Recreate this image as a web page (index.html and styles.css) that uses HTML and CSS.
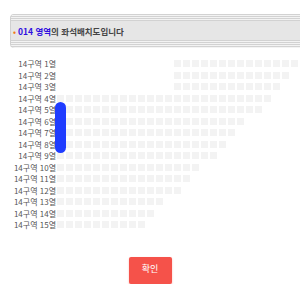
FILE: index.html
```html
<!DOCTYPE html>
<html lang="ko">
<head>
    <meta charset="UTF-8">
    <meta name="viewport" content="width=device-width, initial-scale=1.0">
    <title>좌석배치도</title>
    <link rel="stylesheet" href="styles.css">
    <script>
        // [first seat column, number of seats] for each row
        const rows = [
            [13, 14], [13, 13], [13, 12], [0, 24], [0, 23],
            [0, 21], [0, 20], [0, 19], [0, 18], [0, 16],
            [0, 15], [0, 14], [0, 12], [0, 11], [0, 10]
        ];

        function buildSeats() {
            const map = document.getElementById('seat-map');
            rows.forEach((row, i) => {
                const line = document.createElement('div');
                line.className = 'seat-row';

                const label = document.createElement('div');
                label.className = 'row-label';
                label.textContent = `14구역 ${i + 1}열`;
                line.appendChild(label);

                const seats = document.createElement('div');
                seats.className = 'seats';
                for (let c = 0; c < row[0] + row[1]; c++) {
                    const seat = document.createElement('span');
                    seat.className = c < row[0] ? 'seat empty' : 'seat';
                    seats.appendChild(seat);
                }
                line.appendChild(seats);
                map.appendChild(line);
            });
        }

        window.onload = buildSeats;
    </script>
</head>
<body>
    <div class="header">
        <span class="bullet">•</span>
        <span class="zone">014 영역</span><span class="header-text">의 좌석배치도입니다</span>
    </div>

    <div class="seat-area">
        <div class="seat-map" id="seat-map"></div>
        <div class="scroll-thumb"></div>
    </div>

    <div class="actions">
        <button class="confirm">확인</button>
    </div>
</body>
</html>
```

FILE: styles.css
```css
body {
    font-family: "Noto Sans CJK KR", "Noto Sans", sans-serif;
    margin: 0;
    background-color: #fff;
}
.header {
    display: flex;
    align-items: center;
    height: 34px;
    margin: 14px 0 0 10px;
    padding-left: 3px;
    border-radius: 4px 0 0 4px;
    font-size: 8.5px;
    font-weight: bold;
    background:
        repeating-linear-gradient(#d2d2d2 0 1px, #f3f3f3 1px 2px) top / 100% 7px no-repeat,
        repeating-linear-gradient(#d2d2d2 0 1px, #f3f3f3 1px 2px) bottom / 100% 8px no-repeat,
        #e6e6e6;
    box-shadow: inset 1px 0 0 #d0d0d0;
}
.bullet {
    color: #f07a1a;
    font-size: 8px;
    margin-right: 2px;
}
.zone {
    color: #3010e0;
}
.header-text {
    color: #444;
}

/* seat map */
.seat-area {
    position: relative;
    margin-top: 10px;
}
.seat-row {
    display: flex;
    align-items: center;
    height: 11.5px;
}
.row-label {
    width: 56px;
    flex: none;
    text-align: right;
    font-size: 8px;
    line-height: 11px;
    color: #555;
    white-space: nowrap;
}
.seats {
    display: flex;
    gap: 2px;
    margin-left: 1px;
}
.seat {
    width: 7px;
    height: 7px;
    background-color: #f3f3f3;
}
.seat.empty {
    visibility: hidden;
}
.scroll-thumb {
    position: absolute;
    left: 55px;
    top: 44px;
    width: 11px;
    height: 51px;
    border-radius: 6px;
    background-color: #1f3cff;
}

.actions {
    display: flex;
    justify-content: center;
    margin-top: 26px;
}
.confirm {
    width: 43px;
    height: 27px;
    padding: 0 0 3px;
    border: none;
    border-radius: 2px;
    background-color: #f5524a;
    color: #fff;
    font-family: inherit;
    font-size: 9px;
    box-shadow: 0 1px 2px rgba(245, 82, 74, 0.4);
}
```
